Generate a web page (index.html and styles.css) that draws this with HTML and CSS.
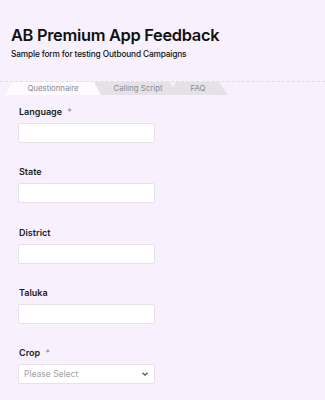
FILE: index.html
```html
<!DOCTYPE html>
<html lang="en">

<head>
    <meta charset="UTF-8">
    <meta name="viewport" content="width=device-width, initial-scale=1.0">
    <title>AB Premium App Feedback</title>
    <link rel="stylesheet" href="styles.css">
</head>

<body>
<div class="page">
    <!-- Form header -->
    <div class="header">
        <h1>AB Premium App Feedback</h1>
        <p>Sample form for testing Outbound Campaigns</p>
    </div>

    <!-- Tabs -->
    <div class="tabs">
        <div class="tab active">Questionnaire</div>
        <div class="tab script">Calling Script</div>
        <div class="tab faq">FAQ</div>
    </div>

    <!-- Questionnaire fields -->
    <form class="form">
        <div class="field">
            <label for="language">Language <span class="req">*</span></label>
            <input type="text" id="language">
        </div>
        <div class="field">
            <label for="state">State</label>
            <input type="text" id="state">
        </div>
        <div class="field">
            <label for="district">District</label>
            <input type="text" id="district">
        </div>
        <div class="field">
            <label for="taluka">Taluka</label>
            <input type="text" id="taluka">
        </div>
        <div class="field">
            <label for="crop">Crop <span class="req">*</span></label>
            <div class="select">
                <span>Please Select</span>
                <svg width="8" height="6" viewBox="0 0 8 6"><path d="M1.5 1.8 L4 4.2 L6.5 1.8" fill="none" stroke="#555" stroke-width="1.3"/></svg>
            </div>
        </div>
    </form>
</div>
</body>

</html>
```

FILE: styles.css
```css
* {
    box-sizing: border-box;
    margin: 0;
    padding: 0;
}

body {
    font-family: Inter, "Noto Sans", sans-serif;
    background-color: #f8f1fd;
    color: #111;
}

.page {
    min-height: 400px;
}

.header {
    padding: 25px 11px 0;
}

h1 {
    font-size: 16.4px;
    line-height: 20px;
    font-weight: 600;
    letter-spacing: -0.3px;
}

.header p {
    font-size: 8.3px;
    line-height: 11px;
    font-weight: 500;
    letter-spacing: -0.15px;
    margin-top: 3.5px;
}

.tabs {
    margin-top: 21.5px;
    border-top: 1px dashed #e2dce6;
    display: flex;
    height: 13px;
    padding-left: 5px;
}

.tab {
    height: 13px;
    font-size: 7.8px;
    line-height: 13px;
    color: #8a8a8e;
    text-align: center;
    position: relative;
}

.tab.active {
    width: 96px;
    background-color: #fdfbfe;
    clip-path: polygon(7px 0, 89px 0, 96px 100%, 0 100%);
    z-index: 3;
}

.tab.script {
    width: 88px;
    margin-left: -11px;
    padding-left: 8px;
    background-color: #e4e2e7;
    clip-path: polygon(5px 0, 80px 0, 88px 100%, 0 100%);
    z-index: 2;
}

.tab.faq {
    width: 60px;
    margin-left: -10px;
    background-color: #e4e2e7;
    clip-path: polygon(8px 0, 51px 0, 60px 100%, 0 100%);
    z-index: 1;
}

.form {
    padding: 12px 18px 0;
}

.field {
    margin-bottom: 23.25px;
}

label {
    display: block;
    font-size: 9px;
    line-height: 12px;
    font-weight: 600;
    padding-left: 1px;
    margin-bottom: 5px;
    color: #1a1a1a;
}

.req {
    color: #888;
    font-weight: 400;
    margin-left: 3px;
}

input[type="text"],
.select {
    display: block;
    width: 137px;
    height: 20px;
    background-color: #fff;
    border: 1px solid #e6e1ea;
    border-radius: 2px;
}

.select {
    display: flex;
    align-items: center;
    justify-content: space-between;
    padding: 0 5px 0 5px;
    font-size: 8.5px;
    color: #a3a3a8;
}
```
